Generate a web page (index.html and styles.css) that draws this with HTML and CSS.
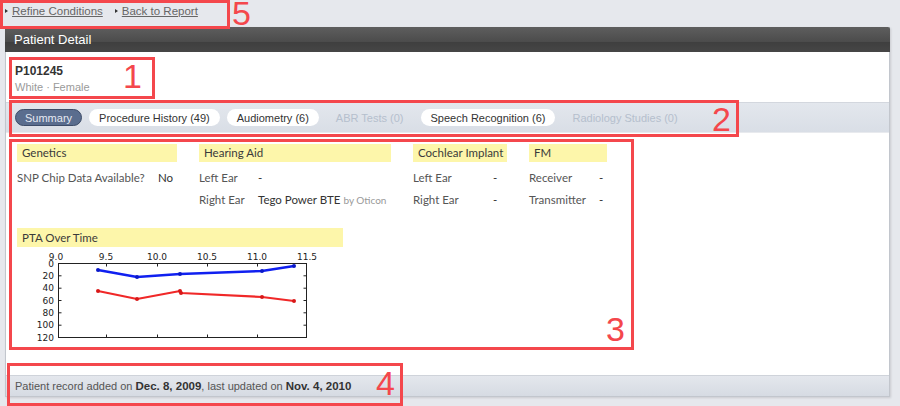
FILE: index.html
```html
<!DOCTYPE html>
<html>
<head>
<meta charset="utf-8">
<link rel="stylesheet" href="styles.css">
</head>
<body>
<div class="crumbs">
  <span class="tri"></span><a class="crumb">Refine Conditions</a>
  <span class="tri second"></span><a class="crumb">Back to Report</a>
</div>
<div class="panel">
  <div class="panel-head">Patient Detail</div>
  <div class="ident">
    <div class="pid">P101245</div>
    <div class="demo">White · Female</div>
  </div>
  <div class="tabs">
    <span class="tab active">Summary</span>
    <span class="tab">Procedure History (49)</span>
    <span class="tab">Audiometry (6)</span>
    <span class="tab off">ABR Tests (0)</span>
    <span class="tab">Speech Recognition (6)</span>
    <span class="tab off">Radiology Studies (0)</span>
  </div>
  <div class="content">
    <div class="sections">
      <div class="sec sec-gen">
        <div class="sec-h">Genetics</div>
        <div class="row"><span class="lbl">SNP Chip Data Available?</span><span class="val">No</span></div>
      </div>
      <div class="sec sec-ha">
        <div class="sec-h">Hearing Aid</div>
        <div class="row"><span class="lbl">Left Ear</span><span class="val">-</span></div>
        <div class="row"><span class="lbl">Right Ear</span><span class="val">Tego Power BTE <span class="by">by Oticon</span></span></div>
      </div>
      <div class="sec sec-ci">
        <div class="sec-h">Cochlear Implant</div>
        <div class="row"><span class="lbl">Left Ear</span><span class="val">-</span></div>
        <div class="row"><span class="lbl">Right Ear</span><span class="val">-</span></div>
      </div>
      <div class="sec sec-fm">
        <div class="sec-h">FM</div>
        <div class="row"><span class="lbl">Receiver</span><span class="val">-</span></div>
        <div class="row"><span class="lbl">Transmitter</span><span class="val">-</span></div>
      </div>
    </div>
    <div class="pta">
      <div class="sec-h">PTA Over Time</div>
      <svg class="chart" width="300" height="95" viewBox="0 0 300 95">
        <g class="ticklbl" text-anchor="middle">
          <text x="39" y="10">9.0</text>
          <text x="89" y="10">9.5</text>
          <text x="140" y="10">10.0</text>
          <text x="190" y="10">10.5</text>
          <text x="240" y="10">11.0</text>
          <text x="290" y="10">11.5</text>
        </g>
        <g class="ticklbl" text-anchor="end">
          <text x="37" y="17">0</text>
          <text x="37" y="29">20</text>
          <text x="37" y="41.3">40</text>
          <text x="37" y="53.6">60</text>
          <text x="37" y="66">80</text>
          <text x="37" y="78.3">100</text>
          <text x="37" y="90.6">120</text>
        </g>
        <rect x="41.5" y="13.5" width="248" height="74" fill="none" stroke="#222" stroke-width="1"/>
        <g stroke="#222" stroke-width="1">
          <path d="M89.5 13.5v3M140.5 13.5v3M190.5 13.5v3M240.5 13.5v3M89.5 87.5v-3M140.5 87.5v-3M190.5 87.5v-3M240.5 87.5v-3"/>
          <path d="M41.5 25.8h3M41.5 38.2h3M41.5 50.5h3M41.5 62.8h3M41.5 75.2h3M289.5 25.8h-3M289.5 38.2h-3M289.5 50.5h-3M289.5 62.8h-3M289.5 75.2h-3"/>
        </g>
        <polyline points="81,20 120,27 163,24 245,21 277,16" fill="none" stroke="#1020f0" stroke-width="2.6" stroke-linejoin="round"/>
        <polyline points="81,41 120,49 163,41 164,43 245,47 277,51" fill="none" stroke="#f02828" stroke-width="2.2" stroke-linejoin="round"/>
        <g fill="#0a18c8">
          <circle cx="81" cy="20" r="2"/><circle cx="120" cy="27" r="2"/><circle cx="163" cy="24" r="2"/><circle cx="245" cy="21" r="2"/><circle cx="277" cy="16" r="2"/>
        </g>
        <g fill="#d81818">
          <circle cx="81" cy="41" r="2"/><circle cx="120" cy="49" r="2"/><circle cx="163" cy="41" r="2"/><circle cx="164" cy="43" r="2"/><circle cx="245" cy="47" r="2"/><circle cx="277" cy="51" r="2"/>
        </g>
      </svg>
    </div>
  </div>
  <div class="foot">Patient record added on <b>Dec. 8, 2009</b>, last updated on <b>Nov. 4, 2010</b></div>
</div>

<div class="note n5"></div><span class="num d5">5</span>
<div class="note n1"></div><span class="num d1">1</span>
<div class="note n2"></div><span class="num d2">2</span>
<div class="note n3"></div><span class="num d3">3</span>
<div class="note n4"></div><span class="num d4">4</span>
</body>
</html>
```

FILE: styles.css
```css
html, body {
  margin: 0;
  padding: 0;
}
body {
  width: 900px;
  height: 406px;
  overflow: hidden;
  background: #e6e8ed;
  font-family: "Liberation Sans", Arial, sans-serif;
  position: relative;
}
.crumbs {
  height: 27px;
  display: flex;
  align-items: center;
  padding-left: 5px;
  font-size: 11.5px;
  color: #666;
  padding-bottom: 5px;
  box-sizing: border-box;
}
.tri {
  width: 0;
  height: 0;
  border-left: 3px solid #333;
  border-top: 2.5px solid transparent;
  border-bottom: 2.5px solid transparent;
  margin-right: 4px;
}
.tri.second {
  margin-left: 12px;
}
.crumb {
  text-decoration: underline;
  color: #666;
}
.panel {
  margin-left: 5px;
  width: 885px;
  box-sizing: border-box;
  border: 1px solid #c2c6cd;
  border-top: none;
  box-shadow: 1px 1px 2px rgba(0,0,0,0.12);
  background: #fff;
}
.panel-head {
  height: 25px;
  box-sizing: border-box;
  padding-left: 9px;
  display: flex;
  align-items: center;
  color: #fff;
  font-size: 13px;
  background: linear-gradient(#5e5e5e, #4c4c4c 58%, #3f3f3f 62%, #464646);
  border-radius: 2px 2px 0 0;
  margin: 0 -1px;
}
.ident {
  height: 51px;
  box-sizing: border-box;
  padding: 12px 9px 0;
  border-bottom: 1px solid #d3d7de;
}
.pid {
  font-weight: bold;
  font-size: 12px;
  color: #333;
  line-height: 14px;
}
.demo {
  font-size: 11px;
  color: #9a9a9a;
  line-height: 14px;
  margin-top: 2px;
}
.tabs {
  height: 30px;
  box-sizing: border-box;
  display: flex;
  align-items: center;
  gap: 7px;
  padding-left: 9px;
  background: linear-gradient(#e3e7ed, #d9dee6);
  border-bottom: 1px solid #e8eaee;
}
.tab {
  height: 17px;
  box-sizing: border-box;
  padding: 0 10px;
  border-radius: 9px;
  background: #fff;
  font-size: 11px;
  color: #333;
  display: flex;
  align-items: center;
}
.tab.active {
  background: #5a6d8e;
  border: 1px solid #3d4c68;
  color: #e6eaf2;
  padding: 0 9px;
}
.tab.off {
  background: transparent;
  color: #b5bfcd;
}
.content {
  height: 242px;
  box-sizing: border-box;
  padding: 11px 0 0 11px;
  font-family: Lato, "Open Sans", sans-serif;
  font-size: 11.5px;
  color: #4a4a4a;
}
.sections {
  display: flex;
  gap: 22px;
}
.sec-h {
  background: #fdf6aa;
  height: 18px;
  line-height: 18px;
  padding-left: 5px;
  font-size: 11.5px;
  color: #3a3a3a;
  margin-bottom: 4px;
  white-space: nowrap;
}
.row {
  display: flex;
  height: 22px;
  align-items: center;
  white-space: nowrap;
}
.sec-gen { width: 160px; }
.sec-ha { width: 192px; }
.sec-ci { width: 94px; }
.sec-fm { width: 78px; }
.sec-gen .lbl { width: 141px; }
.sec-ha .lbl { width: 59px; }
.sec-ci .lbl { width: 80px; }
.sec-fm .lbl { width: 70px; }
.lbl { color: #555; }
.val { color: #333; }
.by {
  font-size: 10px;
  color: #999;
}
.pta {
  margin-top: 18px;
  width: 326px;
}
.pta .sec-h {
  height: 19px;
  line-height: 19px;
  margin-bottom: 3px;
}
.chart {
  display: block;
}
.ticklbl {
  font-family: "DejaVu Sans", sans-serif;
  font-size: 9px;
  fill: #222;
}
.foot {
  height: 21px;
  box-sizing: border-box;
  padding-left: 9px;
  display: flex;
  align-items: center;
  white-space: pre;
  font-size: 11px;
  color: #555;
  background: linear-gradient(#e4e7ed, #d6dbe3);
  border-top: 1px solid #cfd3da;
}
.foot b {
  color: #333;
  font-size: 11.5px;
}
.note {
  position: absolute;
  box-sizing: border-box;
  border: 3px solid #f4474c;
}
.n5 { left: 0; top: 0; width: 230px; height: 29px; }
.n1 { left: 9px; top: 57px; width: 146px; height: 42px; }
.n2 { left: 9px; top: 100px; width: 730px; height: 37px; }
.n3 { left: 9px; top: 139px; width: 625px; height: 211px; }
.n4 { left: 7px; top: 363px; width: 396px; height: 43px; }
.num {
  position: absolute;
  font-family: "Liberation Sans", Arial, sans-serif;
  font-size: 34px;
  line-height: 26px;
  color: #f4474c;
}
.d5 { left: 232px; top: 0; }
.d1 { left: 123px; top: 63px; }
.d2 { left: 712px; top: 106px; }
.d3 { left: 606px; top: 316px; }
.d4 { left: 376px; top: 370px; }
```
